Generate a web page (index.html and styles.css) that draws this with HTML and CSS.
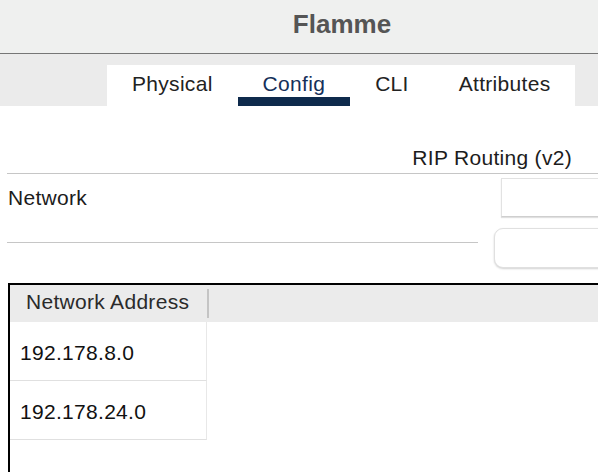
FILE: index.html
```html
<!DOCTYPE html>
<html>
<head>
<meta charset="utf-8">
<link rel="stylesheet" href="styles.css">
</head>
<body>
<div class="page">
  <header class="title-bar">Flamme</header>
  <div class="tab-band">
    <nav class="tabs">
      <span class="tab">Physical</span>
      <span class="tab active">Config</span>
      <span class="tab">CLI</span>
      <span class="tab">Attributes</span>
    </nav>
  </div>
  <main class="content">
    <div class="section-title">RIP Routing (v2)</div>
    <div class="rule"></div>
    <div class="form-row first">
      <label class="label">Network</label>
      <div class="input"></div>
    </div>
    <div class="form-row second">
      <div class="rule short"></div>
      <div class="button"></div>
    </div>
    <div class="table">
      <div class="thead">
        <div class="th">Network Address</div>
        <div class="th-sep"></div>
      </div>
      <div class="tr"><div class="td">192.178.8.0</div></div>
      <div class="tr"><div class="td">192.178.24.0</div></div>
    </div>
  </main>
</div>
</body>
</html>
```

FILE: styles.css
```css
html, body {
  margin: 0;
  padding: 0;
  background: #ffffff;
}
body {
  width: 598px;
  height: 472px;
  overflow: hidden;
  font-family: "Liberation Sans", Arial, Helvetica, sans-serif;
  font-size: 21px;
  letter-spacing: 0.3px;
  color: #1c1c1c;
}
.page {
  width: 598px;
  overflow: hidden;
}
.title-bar {
  height: 49px;
  line-height: 49px;
  padding: 0 0 4px 86px;
  background: #eff0ef;
  border-bottom: 1px solid #767676;
  text-align: center;
  font-weight: bold;
  font-size: 26px;
  letter-spacing: 0;
  color: #555555;
}
.tab-band {
  background: #ebebeb;
  padding: 11px 0 0 107px;
  height: 41px;
}
.tabs {
  display: flex;
  width: 468px;
  height: 41px;
  background: #ffffff;
}
.tab {
  position: relative;
  padding: 0 25px 3px 25px;
  line-height: 38px;
  color: #222222;
  white-space: nowrap;
}
.tab.active {
  color: #15305a;
}
.tab.active::after {
  content: "";
  position: absolute;
  left: 0;
  right: 0;
  bottom: 0;
  height: 9px;
  background: #0e2a4c;
}
.content {
  padding-top: 40px;
}
.section-title {
  line-height: 24px;
  padding-bottom: 3px;
  text-align: right;
  padding-right: 26px;
}
.rule {
  height: 1px;
  margin-left: 7px;
  background: #c6c6c6;
}
.form-row {
  display: flex;
}
.form-row.first {
  align-items: center;
  padding: 4px 0 5px 0;
}
.label {
  width: 493px;
  padding-left: 8px;
  line-height: 24px;
  flex-shrink: 0;
}
.input {
  width: 120px;
  height: 37px;
  border: 1px solid #e2e2e2;
  border-bottom-color: #cfcfcf;
  box-shadow: 0 1px 1px rgba(0, 0, 0, 0.12);
  background: #ffffff;
  flex-shrink: 0;
}
.form-row.second {
  padding-top: 6px;
}
.rule.short {
  width: 471px;
  margin-top: 14px;
  flex-shrink: 0;
}
.button {
  margin-left: 16px;
  width: 130px;
  height: 38px;
  border: 1px solid #e0e0e0;
  border-radius: 9px;
  box-shadow: 0 1px 2px rgba(0, 0, 0, 0.18);
  background: #ffffff;
  flex-shrink: 0;
}
.table {
  margin: 15px 0 0 8px;
  width: 640px;
  height: 200px;
  border: 2px solid #000000;
  border-right: none;
  border-bottom: none;
}
.thead {
  display: flex;
  align-items: center;
  height: 37px;
  background: #ebebeb;
}
.th {
  width: 181px;
  padding: 0 0 4px 16px;
  line-height: 33px;
  color: #2a2a2a;
}
.th-sep {
  width: 2px;
  height: 29px;
  background: #c4c4c4;
}
.tr {
  display: flex;
}
.td {
  width: 186px;
  height: 55px;
  padding: 3px 0 0 10px;
  line-height: 55px;
  border-right: 1px solid #e8e8e8;
  border-bottom: 1px solid #e0e0e0;
  color: #111111;
}
```
